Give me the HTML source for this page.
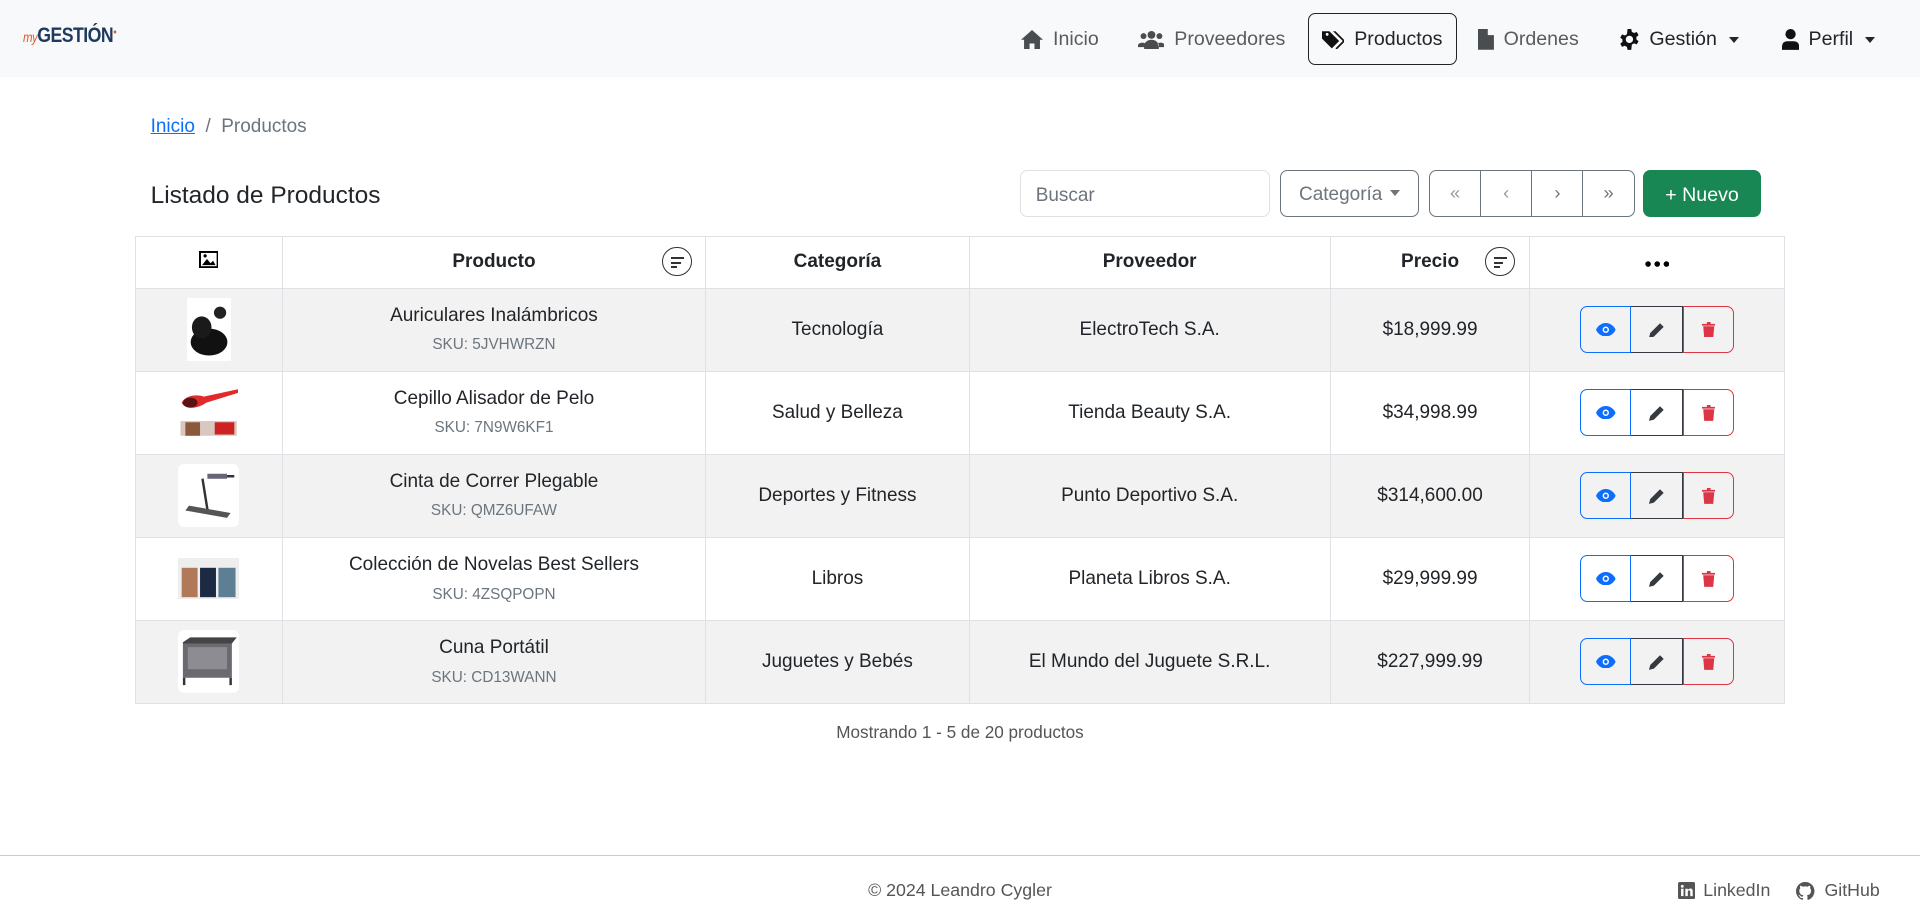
<!DOCTYPE html>
<html><head><meta charset="utf-8">
<style>
html,body{margin:0;padding:0;background:#fff;}
body{width:1568px;height:753px;zoom:1.22449;position:relative;overflow:hidden;font-family:"Liberation Sans",sans-serif;color:#212529;font-size:15.5px;}
.abs{position:absolute;}
.nav{left:0;top:0;width:1568px;height:63px;background:#f8f9fa;}
.ni{position:absolute;top:23px;color:#595c5f;font-size:16px;white-space:nowrap;display:flex;align-items:center;gap:8px;}
.ni svg{fill:#4a4d50}
.caret{display:inline-block;width:0;height:0;border-left:4.5px solid transparent;border-right:4.5px solid transparent;border-top:5px solid #212529;margin-left:2px}
.btn{position:absolute;box-sizing:border-box;display:flex;align-items:center;justify-content:center;}
table{border-collapse:collapse;position:absolute;left:110px;top:193px;width:1347px;table-layout:fixed;}
td,th{border:1px solid #dee2e6;text-align:center;vertical-align:middle;padding:0;}
th{height:41px;font-weight:bold;font-size:15.5px;position:relative}
td{height:67px;}
tr.s td{background:#f2f2f2}
.sku{font-size:12.5px;color:#6c757d;margin-top:8px}
.sort{position:absolute;top:8px;width:24px;height:24px;border:1px solid #333;border-radius:50%;box-sizing:border-box;}
.sort i{position:absolute;left:6px;height:1.6px;background:#333}
.ag{display:inline-flex;height:38px;vertical-align:middle}
.ag div{width:42px;height:38px;box-sizing:border-box;display:flex;align-items:center;justify-content:center}
</style></head><body>
<div class="abs nav"></div>
<div class="abs" style="left:19px;top:20px;font-weight:bold;font-size:17px;color:#1e3a5f;letter-spacing:-0.5px;transform:scaleX(0.85);transform-origin:left"><span style="color:#e0582a;font-style:italic;font-size:11px;font-weight:normal">my</span>GESTIÓN<sup style="color:#e0582a;font-size:6px">●</sup></div>

<div class="ni" style="left:834px"><svg width="18" height="16" viewBox="0 0 18 16"><path d="M9 0L0 8h2.5v8h4.5v-5h4v5h4.5V8H18z"/></svg><span>Inicio</span></div>
<div class="ni" style="left:929px"><svg width="22" height="16" viewBox="0 0 22 16"><circle cx="11" cy="4" r="3.2"/><circle cx="4.5" cy="5" r="2.4"/><circle cx="17.5" cy="5" r="2.4"/><path d="M5 16v-3a6 5 0 0112 0v3zM0 14v-2a4 3 0 016-1l-1 3zM22 14v-2a4 3 0 00-6-1l1 3z"/></svg><span>Proveedores</span></div>
<div class="abs" style="left:1068px;top:11px;width:122px;height:42px;border:1px solid #212529;border-radius:6px;box-sizing:border-box"></div>
<div class="ni" style="left:1080px;color:#212529"><svg width="18" height="16" viewBox="0 0 18 16" style="fill:#111"><path d="M0 1v6l8 8 6-6-8-8zM3 3.5a1.2 1.2 0 110 .1zM9 1l8 8-6 6 1 1 7-7-8-8z"/></svg><span>Productos</span></div>
<div class="ni" style="left:1207px"><svg width="13" height="17" viewBox="0 0 13 17"><path d="M0 0h8l5 5v12H0zM8 0v5h5M3 9h7v1.3H3zM3 12h7v1.3H3z"/></svg><span>Ordenes</span></div>
<div class="ni" style="left:1322px;color:#212529"><svg width="17" height="17" viewBox="0 0 17 17" style="fill:#111"><path d="M7 0h3l.5 2.3 1.8 1 2.2-.9 1.5 2.6-1.8 1.5v2l1.8 1.5-1.5 2.6-2.2-.9-1.8 1L10 17H7l-.5-2.3-1.8-1-2.2.9L1 12l1.8-1.5v-2L1 7 2.5 4.4l2.2.9 1.8-1zM8.5 5.5a3 3 0 100 6 3 3 0 000-6z"/></svg><span>Gestión</span><span class="caret"></span></div>
<div class="ni" style="left:1455px;color:#212529"><svg width="14" height="17" viewBox="0 0 14 17" style="fill:#111"><circle cx="7" cy="4.2" r="4.2"/><path d="M0 17v-3a4 4 0 014-4h6a4 4 0 014 4v3z"/></svg><span>Perfil</span><span class="caret"></span></div>

<div class="abs" style="left:123px;top:95px;font-size:15.5px;color:#6c757d"><span style="color:#0d6efd;text-decoration:underline">Inicio</span> &nbsp;/&nbsp; Productos</div>
<div class="abs" style="left:123px;top:149px;font-size:20px;color:#212529">Listado de Productos</div>

<div class="abs" style="left:833px;top:139px;width:204px;height:38px;border:1px solid #dee2e6;border-radius:6px;box-sizing:border-box;padding:11px 12px;color:#6c757d;font-size:15.5px">Buscar</div>
<div class="btn" style="left:1045px;top:139px;width:114px;height:38px;border:1px solid #6c757d;border-radius:6px;color:#6c757d;font-size:15.5px;padding-top:3px">Categoría<span class="caret" style="border-top-color:#6c757d;margin-left:6px;margin-top:-3px"></span></div>
<div class="abs" style="left:1167px;top:139px;width:168px;height:38px;border:1px solid #6c757d;border-radius:6px;box-sizing:border-box;display:flex;color:#6c757d;font-size:15px">
<div style="flex:1;display:flex;align-items:center;justify-content:center;border-right:1px solid #6c757d;color:#999">«</div>
<div style="flex:1;display:flex;align-items:center;justify-content:center;border-right:1px solid #6c757d;color:#999">‹</div>
<div style="flex:1;display:flex;align-items:center;justify-content:center;border-right:1px solid #6c757d">›</div>
<div style="flex:1;display:flex;align-items:center;justify-content:center">»</div></div>
<div class="btn" style="left:1342px;top:139px;width:96px;height:38px;background:#198754;border-radius:6px;color:#fff;font-size:16px;padding-top:3px">+ Nuevo</div>

<table>
<colgroup><col style="width:120px"><col style="width:346px"><col style="width:215px"><col style="width:295px"><col style="width:163px"><col style="width:208px"></colgroup>
<tr><th><svg width="16" height="14" viewBox="0 0 16 14"><rect x="0.8" y="0.8" width="14.4" height="12.4" fill="none" stroke="#000" stroke-width="1.6"/><path d="M2.5 11.5l4-5 3 3.5 2-2 2 3.5z"/><circle cx="5" cy="4" r="1.3"/></svg></th>
<th>Producto<span class="sort" style="right:11px"><i style="top:7px;width:11px"></i><i style="top:11px;width:8px"></i><i style="top:15px;width:5px"></i></span></th>
<th>Categoría</th><th>Proveedor</th>
<th>Precio<span class="sort" style="right:12px"><i style="top:7px;width:11px"></i><i style="top:11px;width:8px"></i><i style="top:15px;width:5px"></i></span></th>
<th><svg width="20" height="5" viewBox="0 0 20 5"><circle cx="2.5" cy="2.5" r="2.3"/><circle cx="10" cy="2.5" r="2.3"/><circle cx="17.5" cy="2.5" r="2.3"/></svg></th></tr>

<tr class="s"><td><svg width="36" height="52" viewBox="0 0 36 52" style="vertical-align:middle;background:#fff"><ellipse cx="18" cy="36" rx="15" ry="11" fill="#111"/><ellipse cx="12" cy="24" rx="8" ry="9" fill="#1a1a1a"/><ellipse cx="27" cy="12" rx="5" ry="5" fill="#222"/></svg></td>
<td>Auriculares Inalámbricos<div class="sku">SKU: 5JVHWRZN</div></td><td>Tecnología</td><td>ElectroTech S.A.</td><td>$18,999.99</td>
<td><div class="ag"><div style="border:1px solid #0d6efd;border-radius:6px 0 0 6px"><svg width="16" height="11" viewBox="0 0 16 11"><path d="M8 0C4 0 1 3 0 5.5 1 8 4 11 8 11s7-3 8-5.5C15 3 12 0 8 0z" fill="#0d6efd"/><circle cx="8" cy="5.5" r="2.6" fill="#fff"/><circle cx="8" cy="5.5" r="1.4" fill="#0d6efd"/></svg></div><div style="border:1px solid #343a40;border-left:none"><svg width="13" height="13" viewBox="0 0 13 13"><path d="M0 13l1-4 8-8 3 3-8 8z" fill="#343a40"/></svg></div><div style="border:1px solid #dc3545;border-radius:0 6px 6px 0"><svg width="11" height="13" viewBox="0 0 11 13"><path d="M0 1.5h11v1.5H0zM4 0h3v1.5H4zM1 3.5h9L9.2 13H1.8z" fill="#dc3545"/></svg></div></div></td></tr>

<tr><td><svg width="50" height="40" viewBox="0 0 50 40" style="vertical-align:middle"><path d="M3 12c3-6 12-7 18-5l28-6v3L23 12C16 17 6 18 3 12z" fill="#e02b2b"/><ellipse cx="10" cy="12" rx="6" ry="4" fill="#5a1212"/><rect x="2" y="27" width="46" height="12" fill="#d9c8c0"/><rect x="6" y="28" width="12" height="11" fill="#8a5a3a"/><rect x="30" y="28" width="16" height="10" fill="#c22"/></svg></td>
<td>Cepillo Alisador de Pelo<div class="sku">SKU: 7N9W6KF1</div></td><td>Salud y Belleza</td><td>Tienda Beauty S.A.</td><td>$34,998.99</td>
<td><div class="ag"><div style="border:1px solid #0d6efd;border-radius:6px 0 0 6px"><svg width="16" height="11" viewBox="0 0 16 11"><path d="M8 0C4 0 1 3 0 5.5 1 8 4 11 8 11s7-3 8-5.5C15 3 12 0 8 0z" fill="#0d6efd"/><circle cx="8" cy="5.5" r="2.6" fill="#fff"/><circle cx="8" cy="5.5" r="1.4" fill="#0d6efd"/></svg></div><div style="border:1px solid #343a40;border-left:none"><svg width="13" height="13" viewBox="0 0 13 13"><path d="M0 13l1-4 8-8 3 3-8 8z" fill="#343a40"/></svg></div><div style="border:1px solid #dc3545;border-radius:0 6px 6px 0"><svg width="11" height="13" viewBox="0 0 11 13"><path d="M0 1.5h11v1.5H0zM4 0h3v1.5H4zM1 3.5h9L9.2 13H1.8z" fill="#dc3545"/></svg></div></div></td></tr>

<tr class="s"><td><svg width="50" height="52" viewBox="0 0 50 52" style="vertical-align:middle;background:#fff;border-radius:5px"><path d="M20 12l4 25M38 10h8" stroke="#333" stroke-width="2"/><path d="M24 8h16v4H24z" fill="#667"/><path d="M6 38l34 6 3-4-34-6z" fill="#555"/></svg></td>
<td>Cinta de Correr Plegable<div class="sku">SKU: QMZ6UFAW</div></td><td>Deportes y Fitness</td><td>Punto Deportivo S.A.</td><td>$314,600.00</td>
<td><div class="ag"><div style="border:1px solid #0d6efd;border-radius:6px 0 0 6px"><svg width="16" height="11" viewBox="0 0 16 11"><path d="M8 0C4 0 1 3 0 5.5 1 8 4 11 8 11s7-3 8-5.5C15 3 12 0 8 0z" fill="#0d6efd"/><circle cx="8" cy="5.5" r="2.6" fill="#fff"/><circle cx="8" cy="5.5" r="1.4" fill="#0d6efd"/></svg></div><div style="border:1px solid #343a40;border-left:none"><svg width="13" height="13" viewBox="0 0 13 13"><path d="M0 13l1-4 8-8 3 3-8 8z" fill="#343a40"/></svg></div><div style="border:1px solid #dc3545;border-radius:0 6px 6px 0"><svg width="11" height="13" viewBox="0 0 11 13"><path d="M0 1.5h11v1.5H0zM4 0h3v1.5H4zM1 3.5h9L9.2 13H1.8z" fill="#dc3545"/></svg></div></div></td></tr>

<tr><td><svg width="50" height="34" viewBox="0 0 50 34" style="vertical-align:middle"><rect width="50" height="34" fill="#eee"/><rect x="3" y="8" width="13" height="24" fill="#b07a5a"/><rect x="18" y="8" width="13" height="24" fill="#1d2a44"/><rect x="33" y="8" width="14" height="24" fill="#5d7f94"/></svg></td>
<td>Colección de Novelas Best Sellers<div class="sku">SKU: 4ZSQPOPN</div></td><td>Libros</td><td>Planeta Libros S.A.</td><td>$29,999.99</td>
<td><div class="ag"><div style="border:1px solid #0d6efd;border-radius:6px 0 0 6px"><svg width="16" height="11" viewBox="0 0 16 11"><path d="M8 0C4 0 1 3 0 5.5 1 8 4 11 8 11s7-3 8-5.5C15 3 12 0 8 0z" fill="#0d6efd"/><circle cx="8" cy="5.5" r="2.6" fill="#fff"/><circle cx="8" cy="5.5" r="1.4" fill="#0d6efd"/></svg></div><div style="border:1px solid #343a40;border-left:none"><svg width="13" height="13" viewBox="0 0 13 13"><path d="M0 13l1-4 8-8 3 3-8 8z" fill="#343a40"/></svg></div><div style="border:1px solid #dc3545;border-radius:0 6px 6px 0"><svg width="11" height="13" viewBox="0 0 11 13"><path d="M0 1.5h11v1.5H0zM4 0h3v1.5H4zM1 3.5h9L9.2 13H1.8z" fill="#dc3545"/></svg></div></div></td></tr>

<tr class="s"><td><svg width="50" height="52" viewBox="0 0 50 52" style="vertical-align:middle;background:#fff;border-radius:5px"><path d="M4 10l6-4h38l-4 5H4z" fill="#444"/><rect x="4" y="11" width="40" height="28" fill="#6a6a70"/><rect x="8" y="14" width="32" height="18" fill="#8c8c92"/><path d="M5 39v6M43 39v6" stroke="#333" stroke-width="2"/></svg></td>
<td>Cuna Portátil<div class="sku">SKU: CD13WANN</div></td><td>Juguetes y Bebés</td><td>El Mundo del Juguete S.R.L.</td><td>$227,999.99</td>
<td><div class="ag"><div style="border:1px solid #0d6efd;border-radius:6px 0 0 6px"><svg width="16" height="11" viewBox="0 0 16 11"><path d="M8 0C4 0 1 3 0 5.5 1 8 4 11 8 11s7-3 8-5.5C15 3 12 0 8 0z" fill="#0d6efd"/><circle cx="8" cy="5.5" r="2.6" fill="#fff"/><circle cx="8" cy="5.5" r="1.4" fill="#0d6efd"/></svg></div><div style="border:1px solid #343a40;border-left:none"><svg width="13" height="13" viewBox="0 0 13 13"><path d="M0 13l1-4 8-8 3 3-8 8z" fill="#343a40"/></svg></div><div style="border:1px solid #dc3545;border-radius:0 6px 6px 0"><svg width="11" height="13" viewBox="0 0 11 13"><path d="M0 1.5h11v1.5H0zM4 0h3v1.5H4zM1 3.5h9L9.2 13H1.8z" fill="#dc3545"/></svg></div></div></td></tr>
</table>

<div class="abs" style="left:0;width:1568px;top:590px;text-align:center;color:#555;font-size:14px">Mostrando 1 - 5 de 20 productos</div>

<div class="abs" style="left:0;top:698px;width:1568px;height:1px;background:#ccc"></div>
<div class="abs" style="left:0;width:1568px;top:719px;text-align:center;color:#555;font-size:14.5px">© 2024 Leandro Cygler</div>
<div class="abs" style="left:1370px;top:719px;color:#555;font-size:14.5px;display:flex;align-items:center;gap:7px"><svg width="14" height="14" viewBox="0 0 14 14"><rect width="14" height="14" rx="1.5" fill="#555"/><rect x="2.5" y="5.5" width="2" height="6" fill="#fff"/><circle cx="3.5" cy="3.5" r="1.2" fill="#fff"/><path d="M6 5.5h2v1c.5-.8 1.3-1.2 2.2-1.2 1.3 0 1.8.9 1.8 2.3v3.9h-2V8c0-.8-.2-1.2-.9-1.2S8 7.3 8 8v3.5H6z" fill="#fff"/></svg>LinkedIn</div>
<div class="abs" style="left:1467px;top:719px;color:#555;font-size:14.5px;display:flex;align-items:center;gap:8px"><svg width="15" height="15" viewBox="0 0 16 16"><path fill="#555" d="M8 0a8 8 0 00-2.5 15.6c.4 0 .5-.2.5-.4v-1.4c-2.2.5-2.7-1-2.7-1-.4-.9-.9-1.2-.9-1.2-.7-.5.1-.5.1-.5.8.1 1.200.8 1.2.8.7 1.2 1.9.9 2.3.7.1-.5.3-.9.5-1.1-1.8-.2-3.6-.9-3.6-4 0-.9.3-1.6.8-2.1-.1-.2-.4-1 .1-2.1 0 0 .7-.2 2.2.8a7.5 7.5 0 014 0c1.5-1 2.2-.8 2.2-.8.4 1.1.2 1.9.1 2.1.5.6.8 1.3.8 2.1 0 3.1-1.9 3.8-3.6 4 .3.3.5.8.5 1.5v2.2c0 .2.1.5.6.4A8 8 0 008 0z"/></svg>GitHub</div>
</body></html>
